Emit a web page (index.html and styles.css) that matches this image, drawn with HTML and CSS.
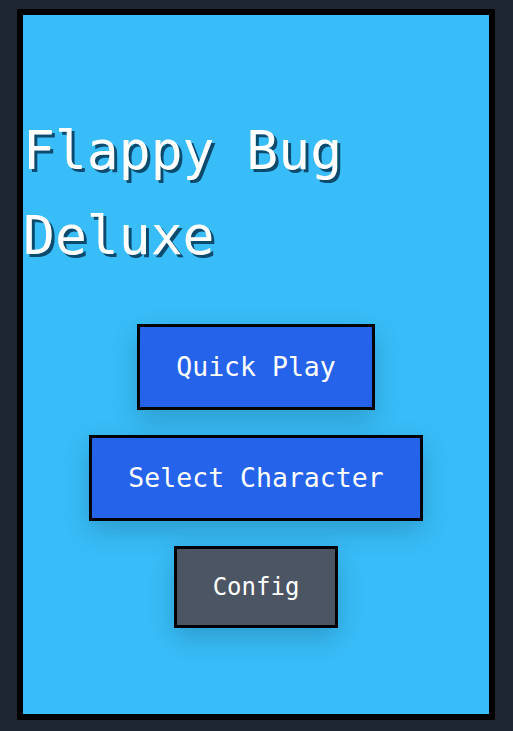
FILE: index.html
```html
<!DOCTYPE html>
<html lang="en">
<head>
    <meta charset="UTF-8">
    <meta name="viewport" content="width=device-width, initial-scale=1.0">
    <title>Flappy Bug Deluxe</title>
    <link rel="stylesheet" href="styles.css">
</head>
<body>
    <div class="game">
        <div class="menu">
            <h1 class="title">Flappy Bug Deluxe</h1>
            <div class="buttons">
                <button class="btn btn-primary">Quick Play</button>
                <button class="btn btn-primary">Select Character</button>
                <button class="btn btn-muted">Config</button>
            </div>
        </div>
    </div>
</body>
</html>
```

FILE: styles.css
```css
:root {
    --page-color: #1e2533;
    --sky-color: #38bdf8;
    --primary-color: #2563eb;
    --muted-color: #4b5563;
    --title-shadow: #0c4a6e;
}

body {
    margin: 0;
    background-color: var(--page-color);
    font-family: 'DejaVu Sans Mono', 'Liberation Mono', monospace;
}

.game {
    box-sizing: border-box;
    width: 478px;
    height: 711px;
    margin: 9px auto 0 17px;
    padding-top: 6px;
    border: 6px solid #000;
    background-color: var(--sky-color);
    display: flex;
    flex-direction: column;
    justify-content: center;
}

.menu {
    display: flex;
    flex-direction: column;
    gap: 46px;
}

.title {
    margin: 0;
    font-size: 53px;
    font-weight: normal;
    line-height: 85px;
    color: #fff;
    text-shadow: 3px 3px 0 var(--title-shadow);
}

.buttons {
    display: flex;
    flex-direction: column;
    align-items: center;
    gap: 25px;
}

.btn {
    font-family: inherit;
    font-size: 26.5px;
    line-height: 40px;
    color: #fff;
    padding: 20px 36px;
    border: 3px solid #000;
    cursor: pointer;
    box-shadow: 0 10px 25px rgba(0, 0, 0, 0.18);
}

.btn-primary {
    background-color: var(--primary-color);
}

.btn-muted {
    background-color: var(--muted-color);
    font-size: 24px;
    line-height: 36px;
}
```
